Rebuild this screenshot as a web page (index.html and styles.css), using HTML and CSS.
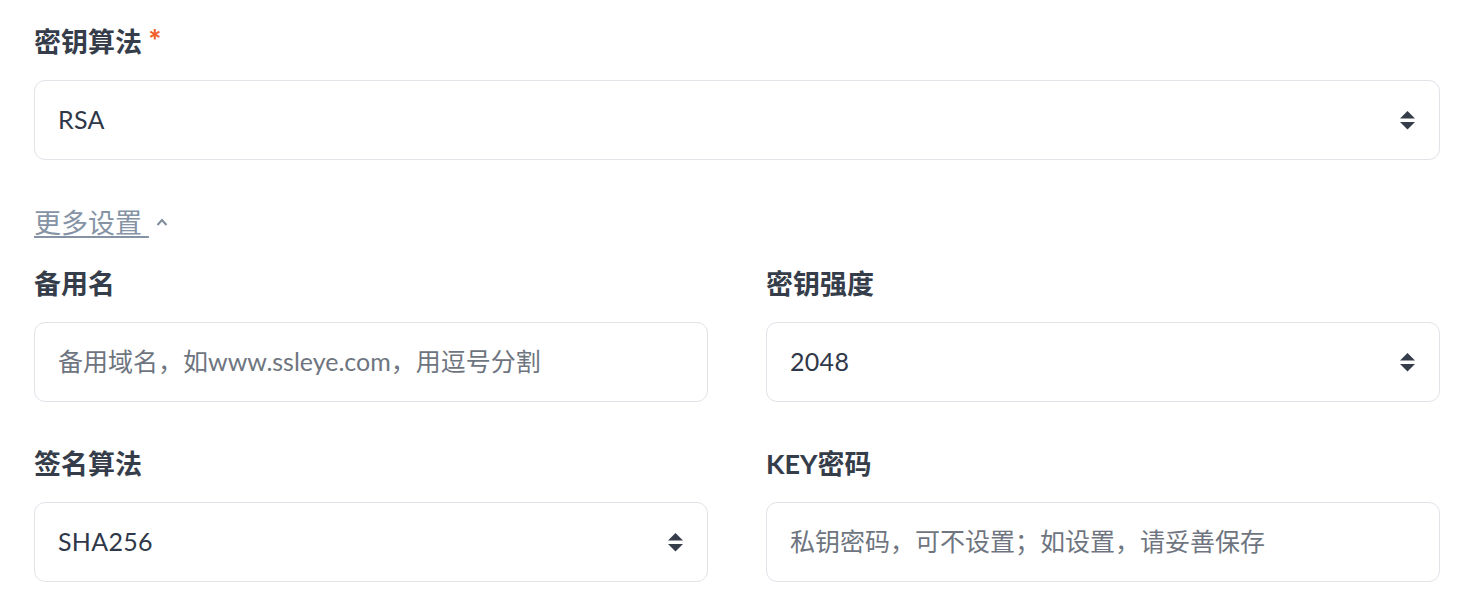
FILE: index.html
```html
<!DOCTYPE html>
<html lang="zh-CN">
<head>
<meta charset="utf-8">
<title>CSR</title>
<link rel="stylesheet" href="styles.css">
</head>
<body>
<form class="form">
  <div class="field">
    <label class="label">密钥算法 <span class="req">*</span></label>
    <div class="select-wrap">
      <select class="control"><option>RSA</option></select>
      <svg class="arrows" viewBox="0 0 15 19" width="15" height="19"><polygon points="0,7.5 7.5,0 15,7.5"/><polygon points="0,11 15,11 7.5,18.5"/></svg>
    </div>
  </div>

  <div class="more">
    <a class="more-link" href="#">更多设置 </a>
    <svg class="chev" viewBox="0 0 12 8" width="12" height="8"><polyline points="1.5,7 6,2 10.5,7"/></svg>
  </div>

  <div class="grid">
    <div class="field">
      <label class="label">备用名</label>
      <input class="control" type="text" placeholder="备用域名，如www.ssleye.com，用逗号分割">
    </div>
    <div class="field">
      <label class="label">密钥强度</label>
      <div class="select-wrap">
        <select class="control"><option>2048</option></select>
        <svg class="arrows" viewBox="0 0 15 19" width="15" height="19"><polygon points="0,7.5 7.5,0 15,7.5"/><polygon points="0,11 15,11 7.5,18.5"/></svg>
      </div>
    </div>
    <div class="field">
      <label class="label">签名算法</label>
      <div class="select-wrap">
        <select class="control"><option>SHA256</option></select>
        <svg class="arrows" viewBox="0 0 15 19" width="15" height="19"><polygon points="0,7.5 7.5,0 15,7.5"/><polygon points="0,11 15,11 7.5,18.5"/></svg>
      </div>
    </div>
    <div class="field">
      <label class="label">KEY密码</label>
      <input class="control" type="text" placeholder="私钥密码，可不设置；如设置，请妥善保存">
    </div>
  </div>
</form>
</body>
</html>
```

FILE: styles.css
```css
* { box-sizing: border-box; }

html, body {
  margin: 0;
  background: #ffffff;
}

body {
  font-family: Lato, "Noto Sans CJK SC", sans-serif;
  color: #363d4a;
}

.form {
  width: 1406px;
  margin-left: 34px;
  padding-top: 24px;
  display: flex;
  flex-direction: column;
}

.field {
  display: flex;
  flex-direction: column;
  gap: 20px;
}

.label {
  height: 36px;
  font-size: 27px;
  line-height: 36px;
  font-weight: 700;
  color: #363d4a;
}

.req {
  color: #f0612a;
  font-size: 30px;
  line-height: 1;
  font-weight: 900;
}

.control {
  width: 100%;
  height: 80px;
  border: 1px solid #e1e3e9;
  border-radius: 11px;
  background: #ffffff;
  padding: 0 60px 3px 23px;
  font-family: Lato, "Noto Sans CJK SC", sans-serif;
  font-size: 25px;
  letter-spacing: 0.3px;
  color: #2f3848;
  outline: none;
  appearance: none;
  -webkit-appearance: none;
  margin: 0;
}

.control::placeholder {
  color: #6e7580;
  opacity: 1;
  letter-spacing: 0;
}

.select-wrap {
  position: relative;
}

.arrows {
  position: absolute;
  right: 25px;
  top: 31px;
  fill: #363d4a;
  pointer-events: none;
}

.more {
  margin-top: 45px;
  display: flex;
  align-items: center;
  gap: 7px;
  height: 36px;
}

.more-link {
  font-size: 27px;
  line-height: 36px;
  color: #8593a5;
  text-decoration: underline;
  text-decoration-thickness: 2px;
  text-underline-offset: 3px;
  white-space: pre;
}

.chev {
  fill: none;
  stroke: #7f8c9c;
  stroke-width: 2;
  margin-top: -2px;
}

.grid {
  margin-top: 25px;
  display: grid;
  grid-template-columns: 1fr 1fr;
  column-gap: 58px;
  row-gap: 44px;
}
```
